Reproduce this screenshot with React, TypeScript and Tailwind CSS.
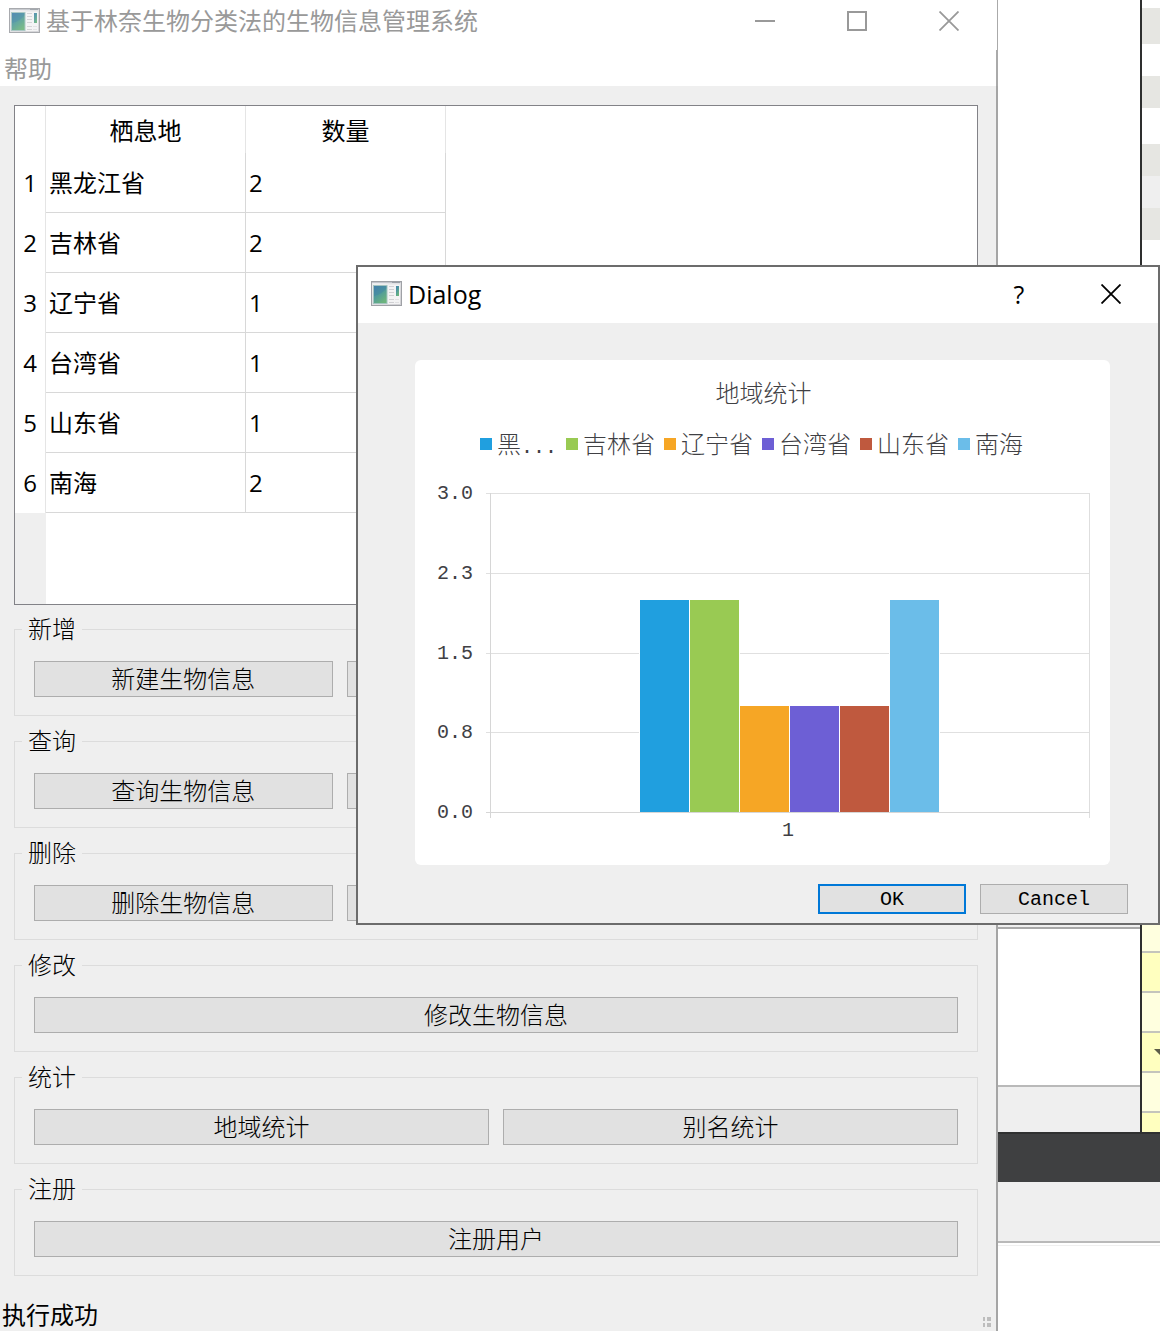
import React from "react";

const ui = "font-['Open_Sans','Noto_Sans_CJK_SC',sans-serif]";
const song = "font-['Open_Sans','Noto_Sans_CJK_SC',sans-serif] font-light";
const mono = "font-['Liberation_Mono',monospace] text-[20px] leading-6";

const rows = [
  { place: "黑龙江省", count: 2 },
  { place: "吉林省", count: 2 },
  { place: "辽宁省", count: 1 },
  { place: "台湾省", count: 1 },
  { place: "山东省", count: 1 },
  { place: "南海", count: 2 },
];

const series = [
  { name: "黑", cut: true, color: "#209fdf", value: 2 },
  { name: "吉林省", cut: false, color: "#99ca53", value: 2 },
  { name: "辽宁省", cut: false, color: "#f6a625", value: 1 },
  { name: "台湾省", cut: false, color: "#6d5fd5", value: 1 },
  { name: "山东省", cut: false, color: "#bf593e", value: 1 },
  { name: "南海", cut: false, color: "#6bbde9", value: 2 },
];

const groups = [
  { title: "新增", actions: ["新建生物信息", "", ""] },
  { title: "查询", actions: ["查询生物信息", "", ""] },
  { title: "删除", actions: ["删除生物信息", "", ""] },
  { title: "修改", actions: ["修改生物信息"] },
  { title: "统计", actions: ["地域统计", "别名统计"] },
  { title: "注册", actions: ["注册用户"] },
];

function AppIcon({ id, faded }: { id: string; faded?: boolean }) {
  return (
    <svg width="32" height="26" viewBox="0 0 32 26" className={faded ? "shrink-0 opacity-90" : "shrink-0"} aria-hidden="true">
      <defs>
        <linearGradient id={id} x1="0" y1="0" x2="0.6" y2="1">
          <stop offset="0" stopColor="#4682ae" />
          <stop offset="0.5" stopColor="#4f9a9c" />
          <stop offset="1" stopColor="#6cb47c" />
        </linearGradient>
        <linearGradient id={id + "f"} x1="0" y1="0" x2="1" y2="1">
          <stop offset="0" stopColor="#f0f0f2" />
          <stop offset="1" stopColor="#cfcfd3" />
        </linearGradient>
      </defs>
      <rect x="0.5" y="0.5" width="30" height="24" fill={`url(#${id}f)`} stroke="#9fa1a6" />
      <path d="M1 1.5h29" stroke="#c3c6cc" />
      <path d="M21 1.5h8" stroke="#9a9fa6" />
      <rect x="2" y="3.5" width="27" height="19.5" fill="#f3f3f4" />
      <rect x="2.5" y="4.5" width="13.500" height="18" fill={`url(#${id})`} stroke="#a4c4c0" />
      <path d="M3 15C8 14 13 11 15.500 7V5H3z" fill="#3a76a8" opacity="0.3" />
      <path d="M18 5.5h5M18 8.500h5M18 11.500h5M18 14.500h5M18 18.500h5M18 21.500h5" stroke="#d0d0d3" />
      <rect x="25" y="5" width="3" height="10" fill={`url(#${id})`} />
      <path d="M24 18.500h4M24 21.500h4" stroke="#e0e0e2" />
    </svg>
  );
}

function Cross() {
  return (
    <svg width="20" height="20" viewBox="0 0 20 20" fill="none" stroke="currentColor" strokeWidth="1.8" aria-hidden="true">
      <path d="M0.500 0.500l19 19M19.500 0.500l-19 19" />
    </svg>
  );
}

function MainWindow() {
  return (
    <main className="flex min-w-0 flex-1 flex-col bg-white">
      <header className="flex h-[50px] items-start border-r border-[#aaaaaa] text-[#999999]">
        <div className="flex h-[42px] flex-1 items-center gap-[5px] pl-[9px]">
          <AppIcon id="mainIcon" faded />
          <h1 className="whitespace-nowrap text-[24px] leading-6">基于林奈生物分类法的生物信息管理系统</h1>
        </div>
        <div className="mr-[2px] flex h-[42px]">
          <button type="button" aria-label="最小化" className="flex w-[92px] items-center justify-center">
            <span className="h-[2px] w-5 bg-[#999999]" />
          </button>
          <button type="button" aria-label="最大化" className="flex w-[92px] items-center justify-center">
            <span className="size-5 border-2 border-[#999999]" />
          </button>
          <button type="button" aria-label="关闭" className="flex w-[92px] items-center justify-center">
            <Cross />
          </button>
        </div>
      </header>
      <nav className="flex h-9 items-center border-r-2 border-[#aaaaaa] pl-1 pt-[2px] text-[#999999]">
        <button type="button" className="text-[24px] leading-6">帮助</button>
      </nav>
      <div className="flex flex-col border-r-2 border-[#a5a5a5] bg-[#efefef] pt-[19px]">
        <div className="ml-[14px] mr-[18px] flex h-[500px] flex-col border border-[#828287] bg-white">
          <table className="w-[431px] table-fixed border-separate border-spacing-0 text-[24px] leading-6">
            <colgroup>
              <col className="w-[31px]" />
              <col className="w-[200px]" />
              <col className="w-[200px]" />
            </colgroup>
            <thead>
              <tr className="h-[47px]">
                <td className="border-r border-[#e5e5e5]" />
                <th scope="col" className="border-r border-[#e5e5e5] p-0 pt-[2px] text-center font-normal">栖息地</th>
                <th scope="col" className="border-r border-[#e5e5e5] p-0 pt-[2px] text-center font-normal">数量</th>
              </tr>
            </thead>
            <tbody>
              {rows.map((r, i) => (
                <tr key={r.place} className="h-[60px]">
                  <th scope="row" className="border-r border-[#e5e5e5] p-0 text-center font-normal">{i + 1}</th>
                  <td className="border-b border-r border-[#d8d8d8] p-0 pl-[3px]">{r.place}</td>
                  <td className="border-b border-r border-[#d8d8d8] p-0 pl-[3px]">{r.count}</td>
                </tr>
              ))}
            </tbody>
          </table>
          <div className="w-[31px] flex-1 bg-[#efefef]" />
        </div>
        <div className={`mb-[23px] ml-[14px] mr-[18px] mt-3 flex flex-col gap-[13px] text-[24px] leading-6 ${song}`}>
          {groups.map((g) => (
            <fieldset key={g.title} className="min-w-0 border border-[#dcdcdc]">
              <legend className="ml-[7px] px-[6px]">{g.title}</legend>
              <div className="flex gap-[14px] px-[19px] pb-[18px] pt-5">
                {g.actions.map((a, i) => (
                  <button
                    key={i}
                    type="button"
                    aria-label={a || `${g.title} ${i + 1}`}
                    className="h-9 min-w-0 flex-1 border border-[#adadad] bg-[#e1e1e1]"
                  >
                    {a}
                  </button>
                ))}
              </div>
            </fieldset>
          ))}
        </div>
        <footer className="flex h-8 items-center justify-between pl-[2px] pr-[5px]">
          <p role="status" className="text-[24px] leading-6">执行成功</p>
          <svg width="9" height="10" viewBox="0 0 9 10" fill="#bdbdbd" className="mt-[14px]" aria-hidden="true">
            <path d="M1 0h2v4H1zM5 0h4v4H5zM1 6h2v4H1zM5 6h4v4H5z" />
          </svg>
        </footer>
      </div>
    </main>
  );
}

function Backdrop() {
  return (
    <aside className="flex w-[162px] shrink-0 flex-col bg-white" aria-hidden="true">
      <div className="flex h-[1132px]">
        <div className="flex flex-1 flex-col">
          <div className="h-[925px]" />
          <div className="h-[2px] bg-[#efefef]" />
          <div className="h-[2px] bg-[#a8a8a8]" />
          <div className="h-[156px]" />
          <div className="h-[2px] bg-[#b9b9b9]" />
          <div className="flex-1 bg-[#efefef]" />
        </div>
        <div className="flex w-5 flex-col border-l-2 border-[#2e2f2f]">
          <div className="mt-2 h-9 bg-[#e6e6e2]" />
          <div className="mt-8 h-8 bg-[#e6e6e2]" />
          <div className="mt-9 h-8 bg-[#e6e6e2]" />
          <div className="h-8 bg-[#efefef]" />
          <div className="h-8 bg-[#e6e6e2]" />
          <div className="flex-1" />
          <div className="h-[28px] border-b-2 border-[#c4c4bc] bg-[#ffffdf]" />
          <div className="h-10 border-b-2 border-[#c4c4bc] bg-[#ffffbf]" />
          <div className="h-10 border-b-2 border-[#c4c4bc] bg-[#ffffdf]" />
          <div className="flex h-10 items-center justify-end border-b-2 border-[#c4c4bc] bg-[#ffffbf]">
            <svg width="6" height="6" viewBox="0 0 6 6" fill="#5c5c48">
              <path d="M0 0h6v6z" />
            </svg>
          </div>
          <div className="h-10 border-b-2 border-[#c4c4bc] bg-[#ffffdf]" />
          <div className="h-[19px] bg-[#ffffbf]" />
        </div>
      </div>
      <div className="h-[50px] border-t-2 border-[#303131] bg-[#3f4041]" />
      <div className="h-[61px] border-b-2 border-[#b9b9b9] bg-[#efefef]" />
      <div className="mt-[2px] h-px bg-[#efefef]" />
    </aside>
  );
}

function BarChart() {
  return (
    <svg viewBox="0 0 604 325" preserveAspectRatio="none" className="mt-[11px] h-[325px] w-full" role="img" aria-label="地域统计" shapeRendering="crispEdges">
      {[0, 80, 160, 239].map((y) => (
        <rect key={y} x="0" y={y} width="604" height="1" fill="#e0e0e0" />
      ))}
      <rect x="603" y="0" width="1" height="325" fill="#dedede" />
      <rect x="4" y="0" width="1" height="325" fill="#d6d6d6" />
      {series.map((s, i) => (
        <rect key={s.name} x={153.5 + i * 50} y={318.500 - s.value * 106} width="50" height={s.value * 106 + 1} fill={s.color} stroke="#ffffff" />
      ))}
      <rect x="0" y="319" width="604" height="1" fill="#d6d6d6" />
    </svg>
  );
}

function StatsDialog() {
  return (
    <div role="dialog" aria-label="Dialog" className="absolute left-[356px] right-0 top-[265px] border-2 border-[#6c6c6c] bg-[#efefef]">
      <header className="flex h-14 items-center bg-white pb-[2px] pl-[13px]">
        <AppIcon id="dialogIcon" />
        <h2 className="ml-[5px] flex-1 text-[25px] leading-6">Dialog</h2>
        <button type="button" aria-label="Help" className="h-[54px] w-[92px] text-[25px] leading-6">?</button>
        <button type="button" aria-label="Close" className="mr-[1px] flex h-[54px] w-[92px] items-center justify-center">
          <Cross />
        </button>
      </header>
      <section className={`ml-[57px] mr-12 mt-[37px] rounded-[6px] bg-white pb-[22px] pl-[22px] pr-5 pt-[21px] text-[24px] leading-6 text-[#404044] ${song}`}>
        <h3 className="text-center font-light">地域统计</h3>
        <ul className="ml-[43px] mt-[27px] flex h-6 items-center gap-[9px]">
          {series.map((s) => (
            <li key={s.name} className="flex h-6 items-center gap-[5px] whitespace-nowrap">
              <span className="size-3 shrink-0" style={{ backgroundColor: s.color }} />
              <span className="flex h-6 items-baseline">
                {s.name}
                {s.cut && <span className={mono}>...</span>}
              </span>
            </li>
          ))}
        </ul>
        <div className="mt-[26px] flex gap-[13px]">
          <div className={`flex h-[343px] w-9 flex-col justify-between ${mono}`}>
            {["3.0", "2.3", "1.5", "0.8", "0.0"].map((t) => (
              <span key={t}>{t}</span>
            ))}
          </div>
          <div className="flex min-w-0 flex-1 flex-col">
            <BarChart />
            <span className={`mt-px text-center ${mono}`}>1</span>
          </div>
        </div>
      </section>
      <div className={`mb-[9px] mr-[30px] mt-[19px] flex justify-end gap-[14px] ${mono}`}>
        <button type="button" className="h-[30px] w-[148px] border-2 border-[#0078d7] bg-[#e1e1e1] pt-[2px]">OK</button>
        <button type="button" className="h-[30px] w-[148px] border border-[#adadad] bg-[#e1e1e1] pt-[2px]">Cancel</button>
      </div>
    </div>
  );
}

export default function App() {
  return (
    <div className={`relative flex min-h-[1332px] items-stretch overflow-hidden bg-white text-black ${ui}`}>
      <MainWindow />
      <Backdrop />
      <StatsDialog />
    </div>
  );
}
